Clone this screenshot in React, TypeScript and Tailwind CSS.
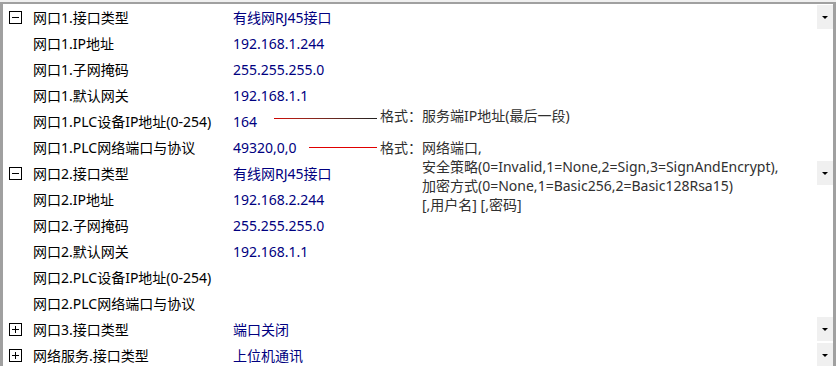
import React from 'react';

type Row = {
  label: string;
  value?: string;
  toggle?: 'open' | 'closed';
  dropdown?: boolean;
};

const rows: Row[] = [
  { label: '网口1.接口类型', value: '有线网RJ45接口', toggle: 'open', dropdown: true },
  { label: '网口1.IP地址', value: '192.168.1.244' },
  { label: '网口1.子网掩码', value: '255.255.255.0' },
  { label: '网口1.默认网关', value: '192.168.1.1' },
  { label: '网口1.PLC设备IP地址(0-254)', value: '164' },
  { label: '网口1.PLC网络端口与协议', value: '49320,0,0' },
  { label: '网口2.接口类型', value: '有线网RJ45接口', toggle: 'open', dropdown: true },
  { label: '网口2.IP地址', value: '192.168.2.244' },
  { label: '网口2.子网掩码', value: '255.255.255.0' },
  { label: '网口2.默认网关', value: '192.168.1.1' },
  { label: '网口2.PLC设备IP地址(0-254)' },
  { label: '网口2.PLC网络端口与协议' },
  { label: '网口3.接口类型', value: '端口关闭', toggle: 'closed', dropdown: true },
  { label: '网络服务.接口类型', value: '上位机通讯', toggle: 'closed', dropdown: true },
];

function Toggle({ kind }: { kind: 'open' | 'closed' }) {
  return (
    <div className="relative w-[13px] h-[13px] border border-black bg-white">
      <div className="absolute left-[2px] right-[2px] top-[5px] h-px bg-black" />
      {kind === 'closed' && <div className="absolute top-[2px] bottom-[2px] left-[5px] w-px bg-black" />}
    </div>
  );
}

function DropButton() {
  return (
    <div className="flex items-center justify-center w-[16px] h-[24px] bg-[#f0f0f0]">
      <div className="w-0 h-0 border-l-[3px] border-r-[3px] border-t-[3px] border-l-transparent border-r-transparent border-t-black" />
    </div>
  );
}

export default function App() {
  return (
    <div
      className="relative w-[836px] h-[366px] overflow-hidden bg-[#f0f0f0] pt-[2px] text-[14px]"
      style={{ fontFamily: '"Noto Sans", "Noto Sans CJK SC", sans-serif' }}
    >
      <div className="h-full bg-white border-t-2 border-l-[3px] border-r-[3px] border-[#a0a0a0]">
        {rows.map((r) => (
          <div key={r.label} className="flex items-center h-[26px]">
            <div className="w-[30px] flex items-center pl-[6px]">
              {r.toggle && <Toggle kind={r.toggle} />}
            </div>
            <div className="w-[200px] text-black whitespace-nowrap">{r.label}</div>
            <div className="flex-1 text-[#000080] whitespace-nowrap">{r.value}</div>
            <div className="w-[16px]">{r.dropdown && <DropButton />}</div>
          </div>
        ))}
      </div>

      {/* annotations drawn over the grid */}
      <div className="absolute left-[274px] top-[118px] w-[103px] h-px bg-gradient-to-r from-[#d00000] to-[#202020]" />
      <div className="absolute left-[380px] top-[106px] text-[#303030] whitespace-nowrap leading-[20px]">
        格式：服务端IP地址(最后一段)
      </div>

      <div className="absolute left-[309px] top-[147px] w-[68px] h-px bg-[#e00000]" />
      <div className="absolute left-[380px] top-[138px] flex text-[#303030] whitespace-nowrap leading-[19px]">
        <span>格式：</span>
        <div className="flex flex-col">
          <span>网络端口,</span>
          <span>安全策略(0=Invalid,1=None,2=Sign,3=SignAndEncrypt),</span>
          <span>加密方式(0=None,1=Basic256,2=Basic128Rsa15)</span>
          <span>[,用户名] [,密码]</span>
        </div>
      </div>
    </div>
  );
}
